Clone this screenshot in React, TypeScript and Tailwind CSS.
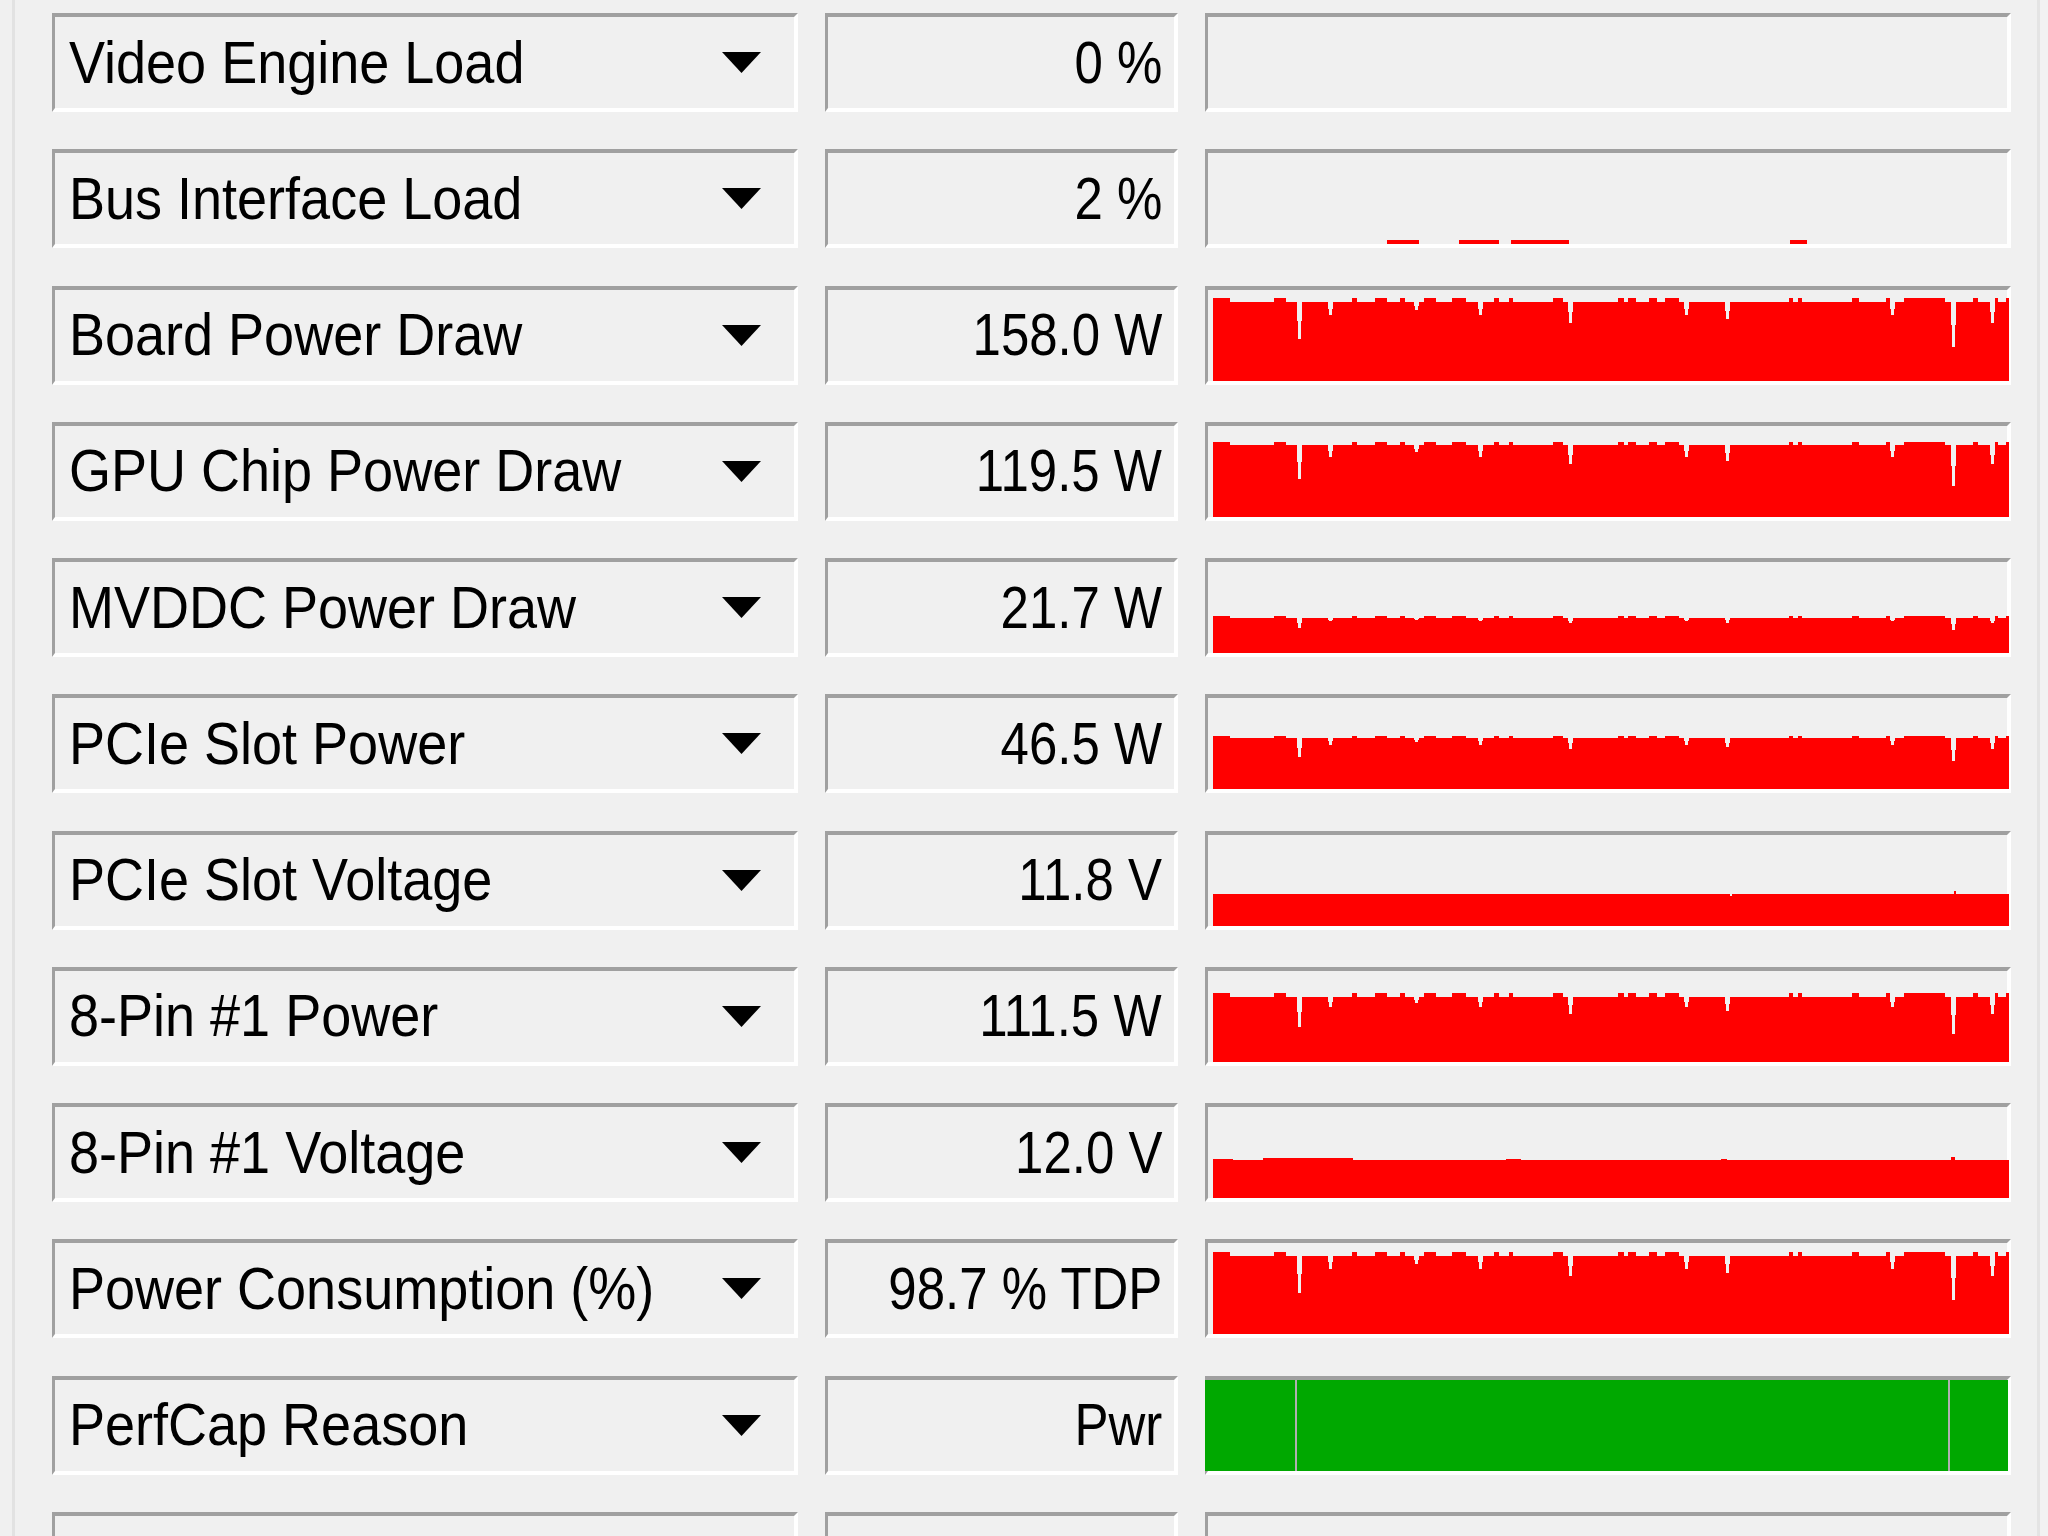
import React from 'react';

// graph geometry (px, full-size screenshot)
const H = 91;
const W = 796;
const X0 = 1212;

// short up-steps on top of the trace, [from, to] in screen x
const BUMPS: [number, number][] = [
  [1212, 1229], [1273, 1285], [1351, 1356], [1374, 1386], [1399, 1404], [1423, 1435],
  [1451, 1465], [1493, 1498], [1508, 1512], [1552, 1562], [1617, 1623], [1627, 1635],
  [1648, 1656], [1664, 1678], [1788, 1792], [1797, 1801], [1851, 1858], [1885, 1889],
  [1903, 1944], [1972, 1977], [1990, 1997], [2005, 2008],
];

// narrow dips, [screen x, remaining fraction of base]
const DIPS: [number, number][] = [
  [1298, 0.53], [1329, 0.835], [1415, 0.9], [1479, 0.835], [1569, 0.74],
  [1685, 0.835], [1726, 0.78], [1891, 0.835], [1952, 0.43], [1991, 0.74],
];

function powerTrace(level: number, dipSoft = 1) {
  const base = level * H;
  const bump = Math.max(2, 4 * (level / 0.868));
  const h = new Array(W).fill(base);
  BUMPS.forEach(([a, b]) => {
    for (let x = a - X0; x < b - X0 && x < W; x++) if (x >= 0) h[x] = base + bump;
  });
  DIPS.forEach(([cx, r]) => {
    const rr = 1 - (1 - r) * dipSoft;
    const c = cx - X0;
    for (let x = c - 1; x <= c + 1; x++) if (x >= 0 && x < W) h[x] = base * rr;
    [c - 2, c + 2].forEach((x) => {
      if (x >= 0 && x < W) h[x] = Math.min(h[x], base * (1 + rr) / 2);
    });
  });
  return h;
}

function flatTrace(level: number, ups: [number, number, number][]) {
  const base = level * H;
  const h = new Array(W).fill(base);
  ups.forEach(([a, b, d]) => {
    for (let x = a - X0; x < b - X0; x++) if (x >= 0 && x < W) h[x] = base + d;
  });
  return h;
}

function toPoints(h: number[]) {
  const pts: string[] = [`0,${H}`];
  h.forEach((v, x) => {
    const y = (H - v).toFixed(1);
    pts.push(`${x},${y}`, `${x + 1},${y}`);
  });
  pts.push(`${W},${H}`);
  return pts.join(' ');
}

type Graph =
  | { kind: 'empty' }
  | { kind: 'dash' }
  | { kind: 'trace'; h: number[] }
  | { kind: 'perfcap' };

const rows: { name: string; value: string; graph: Graph }[] = [
  { name: 'Video Engine Load', value: '0 %', graph: { kind: 'empty' } },
  { name: 'Bus Interface Load', value: '2 %', graph: { kind: 'dash' } },
  { name: 'Board Power Draw', value: '158.0 W', graph: { kind: 'trace', h: powerTrace(0.868) } },
  { name: 'GPU Chip Power Draw', value: '119.5 W', graph: { kind: 'trace', h: powerTrace(0.79) } },
  { name: 'MVDDC Power Draw', value: '21.7 W', graph: { kind: 'trace', h: powerTrace(0.385, 0.6) } },
  { name: 'PCIe Slot Power', value: '46.5 W', graph: { kind: 'trace', h: powerTrace(0.56, 0.8) } },
  {
    name: 'PCIe Slot Voltage',
    value: '11.8 V',
    graph: { kind: 'trace', h: flatTrace(0.35, [[1729, 1731, -2], [1953, 1955, 3]]) },
  },
  { name: '8-Pin #1 Power', value: '111.5 W', graph: { kind: 'trace', h: powerTrace(0.72) } },
  {
    name: '8-Pin #1 Voltage',
    value: '12.0 V',
    graph: {
      kind: 'trace',
      h: flatTrace(0.42, [[1212, 1232, 1], [1262, 1352, 2], [1505, 1520, 1], [1720, 1726, 1], [1950, 1954, 3]]),
    },
  },
  { name: 'Power Consumption (%)', value: '98.7 % TDP', graph: { kind: 'trace', h: powerTrace(0.86) } },
  { name: 'PerfCap Reason', value: 'Pwr', graph: { kind: 'perfcap' } },
  { name: 'GPU Voltage', value: '1.0250 V', graph: { kind: 'empty' } },
];

const sunken =
  'h-full border-t-4 border-l-[3px] border-r-4 border-b-4 border-t-[#a0a0a0] border-l-[#a0a0a0] border-r-white border-b-white bg-[#f0f0f0]';

function GraphBox({ graph }: { graph: Graph }) {
  return (
    <div className={`${sunken} flex`}>
      {graph.kind === 'trace' && (
        <svg width={W} height={H} className="ml-[5px] shrink-0 overflow-visible" shapeRendering="crispEdges">
          <polygon points={toPoints(graph.h)} fill="#ff0000" />
        </svg>
      )}
      {graph.kind === 'dash' && (
        <svg width={W} height={H} className="ml-[5px] shrink-0 overflow-visible" shapeRendering="crispEdges">
          {[[1386, 1418], [1458, 1498], [1510, 1568], [1789, 1806]].map(([a, b]) => (
            <rect key={a} x={a - X0} y={H - 4} width={b - a} height={4} fill="#ff0000" />
          ))}
        </svg>
      )}
      {graph.kind === 'perfcap' && (
        <svg width={803} height={H} className="-ml-[3px] shrink-0 overflow-visible" shapeRendering="crispEdges">
          <rect x={0} y={0} width={803} height={H} fill="#00a800" />
          <rect x={90} y={0} width={2} height={H} fill="#b0b0b0" />
          <rect x={743} y={0} width={2} height={H} fill="#b0b0b0" />
        </svg>
      )}
    </div>
  );
}

function SensorRow({ name, value, graph }: { name: string; value: string; graph: Graph }) {
  return (
    <div className="grid h-[99px] shrink-0 grid-cols-[746px_353px_806px] gap-x-[27px]">
      <div className={`${sunken} flex items-center pl-[14px]`}>
        <span className="inline-block origin-left scale-x-[0.9] text-[60px] leading-[60px] whitespace-nowrap">
          {name}
        </span>
        <svg width="39" height="21" viewBox="0 0 39 21" className="ml-auto mr-[33px] shrink-0">
          <polygon points="0,0 39,0 19.5,21" fill="#000" />
        </svg>
      </div>
      <div className={`${sunken} flex items-center justify-end pr-[12px]`}>
        <span className="inline-block origin-right scale-x-[0.85] text-[60px] leading-[60px] whitespace-nowrap">
          {value}
        </span>
      </div>
      <GraphBox graph={graph} />
    </div>
  );
}

export default function App() {
  return (
    <div className="flex h-[1536px] w-[2048px] overflow-hidden bg-[#f0f0f0] font-['Liberation_Sans',Arial,sans-serif] text-black">
      <div className="w-[12px] shrink-0" />
      <div className="w-[3px] shrink-0 bg-[#e2e2e2]" />
      <div className="flex w-[2022px] shrink-0 flex-col gap-y-[37.27px] pl-[37px] pt-[13px]">
        {rows.map((r) => (
          <SensorRow key={r.name} {...r} />
        ))}
      </div>
      <div className="w-[3px] shrink-0 bg-[#e4e4e4]" />
      <div className="flex-1 bg-[#f2f2f2]" />
    </div>
  );
}
